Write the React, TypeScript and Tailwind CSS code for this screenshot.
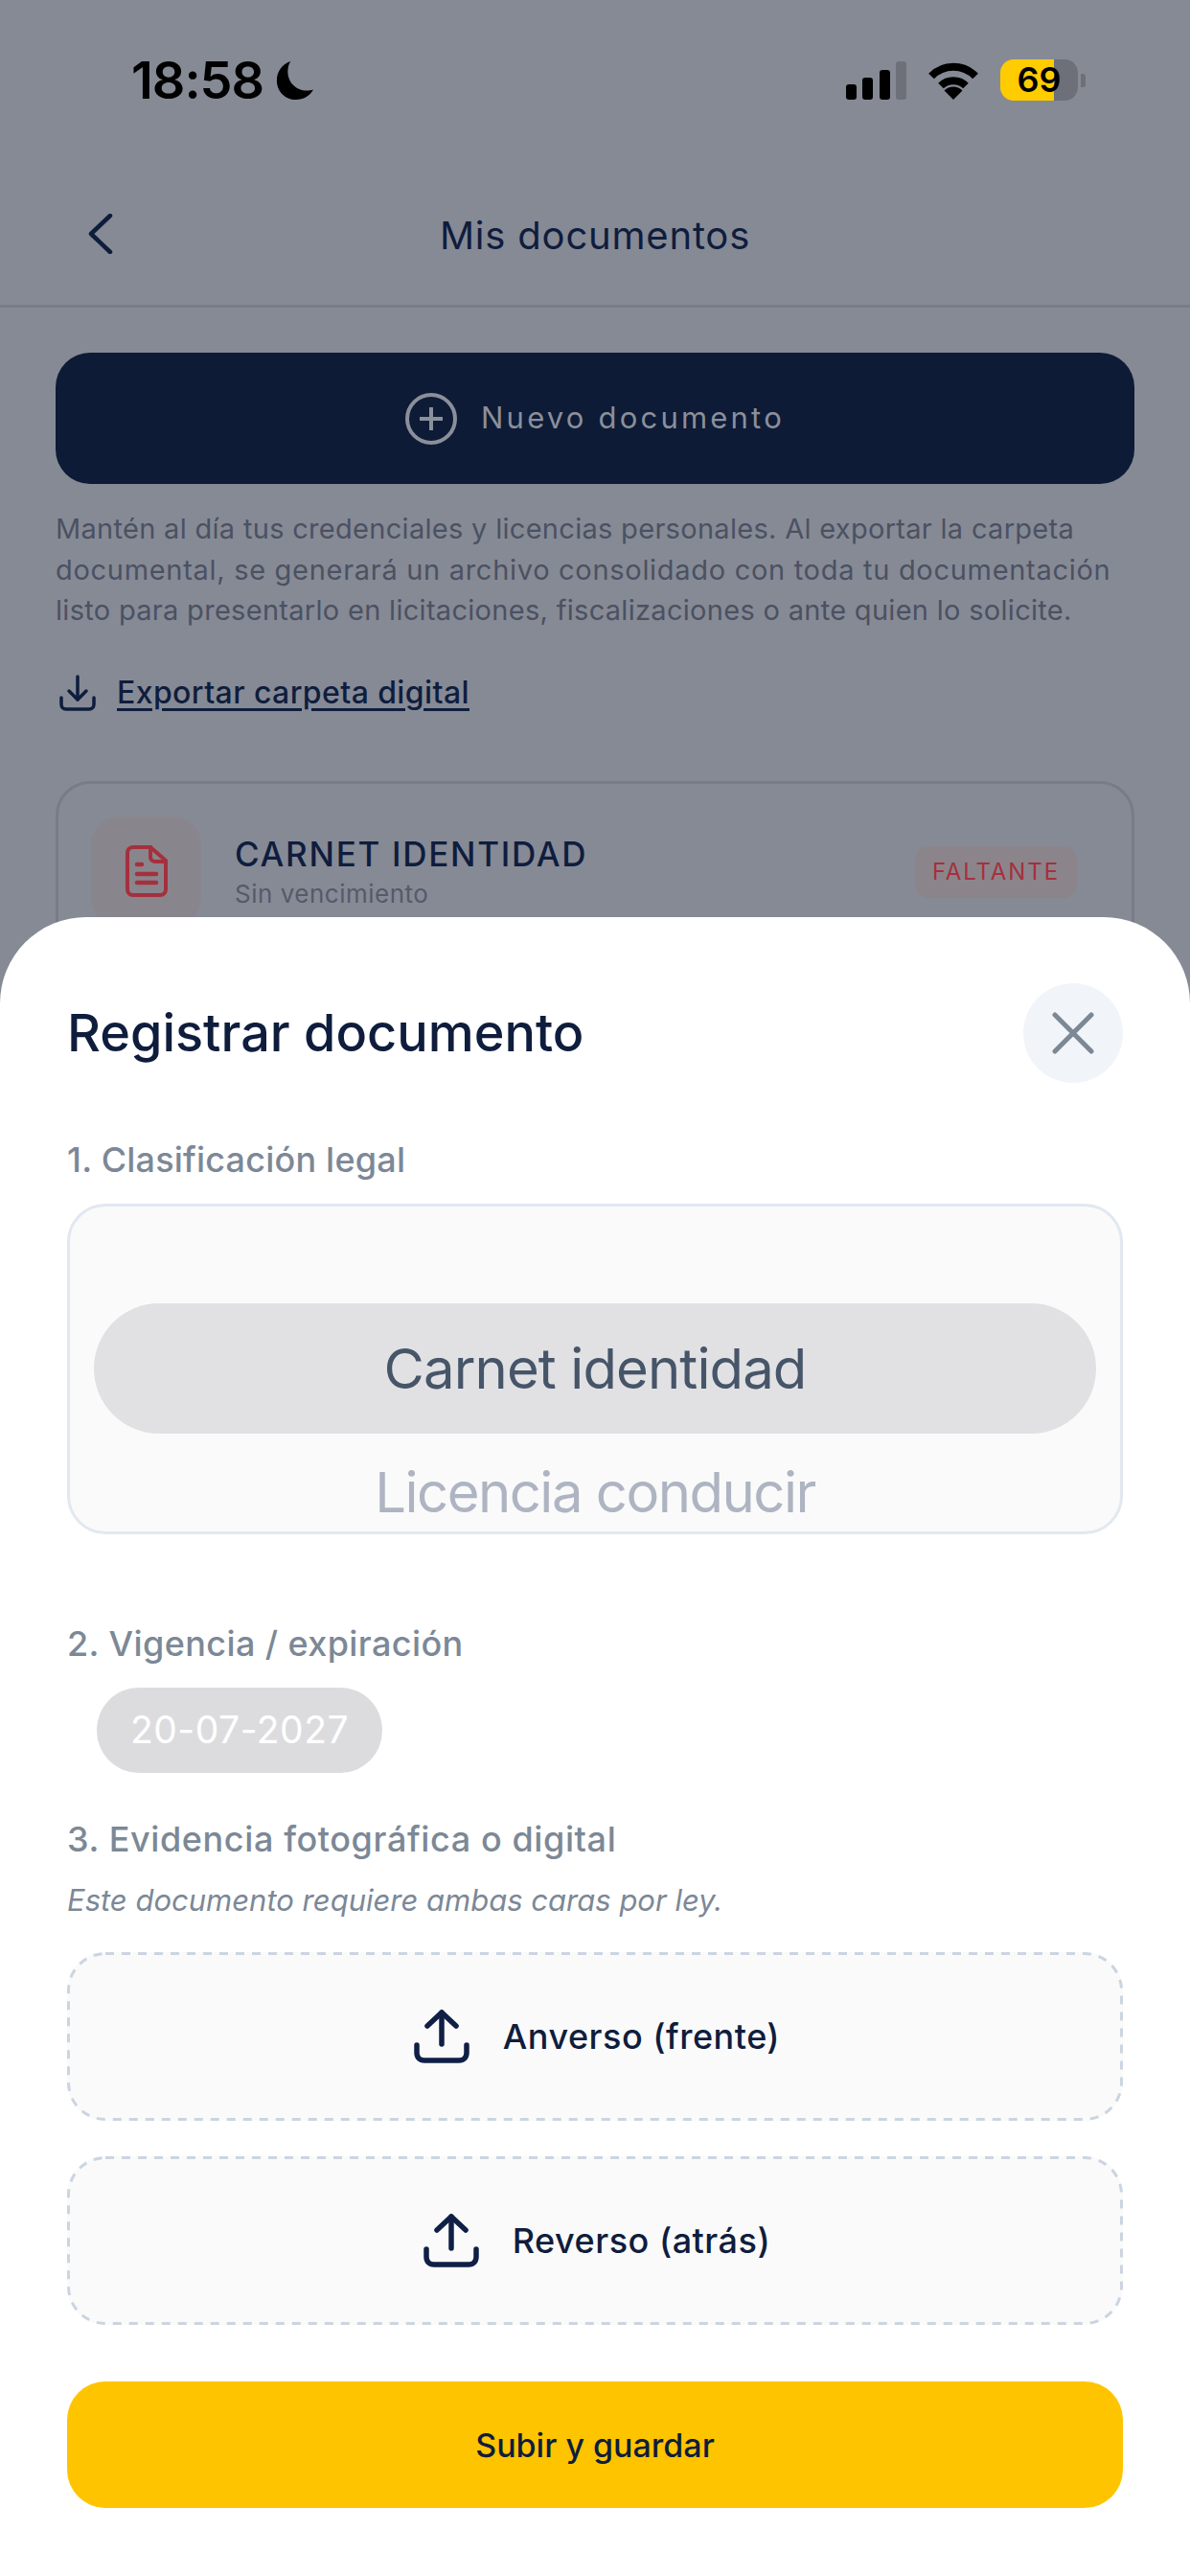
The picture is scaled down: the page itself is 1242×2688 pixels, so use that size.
import React from 'react'

const UploadIcon = () => (
  <svg width="58" height="58" viewBox="0 0 58 58" fill="none" stroke="#0f1f45" strokeWidth="5.500" strokeLinecap="round" strokeLinejoin="round">
    <path d="M29 37V4" />
    <path d="M14 18L29 4l15 14" />
    <path d="M3 38v8c0 5 3 8 8 8h36c5 0 8-3 8-8v-8" />
  </svg>
)

const UploadBox = ({ label }: { label: string }) => (
  <div className="relative h-[176px] rounded-[40px] bg-[#fafafa] flex items-center justify-center gap-[35px] pl-[4px]">
    <svg className="absolute inset-0" width="1102" height="176" fill="none">
      <rect x="1.500" y="1.500" width="1099" height="173" rx="38.500" stroke="#cbd5e1" strokeWidth="3" strokeDasharray="9 8" />
    </svg>
    <UploadIcon />
    <span className="text-[36px] font-medium text-[#0f1d3d] tracking-[0.5px]">{label}</span>
  </div>
)

const StatusBar = () => (
  <div className="h-[168px] flex items-start justify-between pl-[137px] pr-[109px] pt-[62px]">
    <div className="flex items-center gap-[12px]">
      <span className="text-[54px] leading-[44px] font-semibold text-black tracking-[-1px]">18:58</span>
      <svg width="42" height="42" viewBox="0 0 44 44" fill="#000">
        <path d="M17 1C8 4 2 12 2 22c0 12 9 21 21 21 8 0 15-4 19-11-2 1-5 1-7 1-12 0-21-9-21-21 0-4 1-8 3-11z" />
      </svg>
    </div>
    <div className="flex items-center gap-[21px]">
      <svg width="63" height="40" viewBox="0 0 63 40">
        <rect x="0" y="24" width="11" height="16" rx="3" fill="#000" />
        <rect x="17" y="17" width="11" height="23" rx="3" fill="#000" />
        <rect x="35" y="9" width="11" height="31" rx="3" fill="#000" />
        <rect x="52" y="0" width="11" height="40" rx="3" fill="#6d7078" />
      </svg>
      <svg width="56" height="40" viewBox="0 0 56 40" fill="none" stroke="#000" strokeWidth="8">
        <path d="M5 15.5a32 32 0 0 1 46 0" />
        <path d="M15 25.5a18.500 18.500 0 0 1 26 0" />
        <path d="M28 40L18.500 30.500a13.500 13.500 0 0 1 19 0z" fill="#000" stroke="none" />
      </svg>
      <div className="flex items-center gap-[3px]">
        <div className="relative w-[81px] h-[43px] flex">
          <div className="w-[56px] rounded-l-[14px] bg-[#ffcc00]" />
          <div className="flex-1 rounded-r-[14px] bg-[#6d7078]" />
          <span className="absolute inset-0 flex items-center justify-center text-[36px] leading-[43px] font-semibold text-black">69</span>
        </div>
        <div className="w-[5px] h-[14px] rounded-r-[3px] bg-[#6d7078]" />
      </div>
    </div>
  </div>
)

const App = () => {
  return (
    <div className="relative w-[1242px] h-[2688px] overflow-hidden bg-[#868a95] font-[Inter,sans-serif]">
      <StatusBar />

      <div className="relative h-[153px] border-b-[3px] border-[#787c88] flex items-center justify-center pt-[5px]">
        <svg className="absolute left-[92px] top-[55px]" width="26" height="42" viewBox="0 0 26 42" fill="none" stroke="#0f1d3d" strokeWidth="4.500" strokeLinecap="round" strokeLinejoin="round">
          <path d="M23 2L3 21l20 19" />
        </svg>
        <h1 className="text-[40px] font-normal text-[#0f1d3d] tracking-[0.8px]">Mis documentos</h1>
      </div>

      <div className="px-[58px]">
        <div className="mt-[47px] h-[137px] rounded-[36px] bg-[#0d1b36] flex items-center justify-center gap-[25px]">
          <svg width="54" height="54" viewBox="0 0 54 54" fill="none" stroke="#8b8f9b" strokeWidth="4">
            <circle cx="27" cy="27" r="25" />
            <path d="M27 15v24M15 27h24" />
          </svg>
          <span className="text-[31px] text-[#8b8f9b] tracking-[3.200px]">Nuevo documento</span>
        </div>

        <p className="mt-[26px] text-[29px] leading-[42.500px] text-[#4b5162]">
          <span className="block tracking-[0.3px]">Mantén al día tus credenciales y licencias personales. Al exportar la carpeta</span>
          <span className="block tracking-[0.7px]">documental, se generará un archivo consolidado con toda tu documentación</span>
          <span className="block tracking-[0.3px]">listo para presentarlo en licitaciones, fiscalizaciones o ante quien lo solicite.</span>
        </p>

        <div className="mt-[44px] h-[40px] flex items-center gap-[22px] pl-[4px]">
          <svg width="38" height="38" viewBox="0 0 38 38" fill="none" stroke="#0f1d3d" strokeWidth="3.500" strokeLinecap="round" strokeLinejoin="round">
            <path d="M19 2v24" />
            <path d="M10 17l9 9 9-9" />
            <path d="M2 24v7c0 3 2 5 5 5h24c3 0 5-2 5-5v-7" />
          </svg>
          <span className="text-[32px] font-medium text-[#0f1d3d] underline underline-offset-[5px] tracking-[0.4px]">Exportar carpeta digital</span>
        </div>

        <div className="mt-[72px] h-[300px] rounded-[36px] border-[3px] border-[#787c88] px-[34px] pt-[34px] flex items-start gap-[35px]">
          <div className="w-[115px] h-[115px] rounded-[30px] bg-[#89858d] flex items-center justify-center">
            <svg width="44" height="54" viewBox="0 0 44 54" fill="none" stroke="#a5303d" strokeWidth="4" strokeLinejoin="round" strokeLinecap="round">
              <path d="M8 2h18l16 14v30c0 3-2 6-6 6H8c-4 0-6-3-6-6V8c0-3 2-6 6-6z" />
              <path d="M26 2v10c0 3 2 5 5 5h11" />
              <path d="M12 20h5M12 30h20M12 39h20" strokeWidth="4.500" />
            </svg>
          </div>
          <div className="flex-1 pt-[19px]">
            <div className="text-[35px] leading-[40px] font-medium text-[#0f1d3d] tracking-[1.700px]">CARNET IDENTIDAD</div>
            <div className="mt-[4px] text-[26px] leading-[36px] text-[#555a69] tracking-[0.5px]">Sin vencimiento</div>
          </div>
          <div className="mt-[31px] mr-[23px] w-[169px] h-[54px] rounded-[14px] bg-[#8b858b] flex items-center justify-center text-[24px] font-normal text-[#a5303d] tracking-[1.900px]">
            FALTANTE
          </div>
        </div>
      </div>

      <div className="absolute left-0 right-0 bottom-0 h-[1731px] rounded-t-[90px] bg-white px-[70px] pt-[69px]">
        <div className="flex items-center justify-between">
          <h2 className="text-[54px] leading-[60px] font-medium text-[#0f1d3d]">Registrar documento</h2>
          <div className="w-[104px] h-[104px] rounded-full bg-[#f1f5f9] flex items-center justify-center">
            <svg width="44" height="44" viewBox="0 0 44 44" fill="none" stroke="#7c8896" strokeWidth="5" strokeLinecap="round">
              <path d="M3 3l38 38M41 3L3 41" />
            </svg>
          </div>
        </div>

        <div className="mt-[58px] text-[36px] leading-[44px] font-medium text-[#7c8896] tracking-[0.2px]">1. Clasificación legal</div>
        <div className="mt-[24px] h-[345px] rounded-[40px] border-[3px] border-[#e2e8f0] bg-[#fafafa] px-[25px] pt-[101px] overflow-hidden">
          <div className="h-[136px] rounded-[68px] bg-[#e1e1e4] flex items-center justify-center text-[58px] text-[#475569] tracking-[-0.9px]">
            Carnet identidad
          </div>
          <div className="mt-[26px] h-[70px] flex items-center justify-center text-[58px] text-[#aeb4c2] tracking-[-1.500px]">
            Licencia conducir
          </div>
        </div>

        <div className="mt-[92px] text-[36px] leading-[44px] font-medium text-[#7c8896] tracking-[0.4px]">2. Vigencia / expiración</div>
        <div className="mt-[24px] ml-[31px] w-[298px] h-[89px] rounded-[44px] bg-[#dcdcde] flex items-center justify-center text-[39px] text-white tracking-[0.5px]">
          20-07-2027
        </div>

        <div className="mt-[47px] text-[36px] leading-[44px] font-medium text-[#7c8896] tracking-[0.6px]">3. Evidencia fotográfica o digital</div>
        <div className="mt-[22px] text-[31px] leading-[40px] italic text-[#7c8896]">Este documento requiere ambas caras por ley.</div>

        <div className="mt-[34px] flex flex-col gap-[37px]">
          <UploadBox label="Anverso (frente)" />
          <UploadBox label="Reverso (atrás)" />
        </div>

        <div className="mt-[59px] h-[132px] rounded-[40px] bg-[#ffc400] flex items-center justify-center text-[34px] font-medium text-[#0f1d3d]">
          Subir y guardar
        </div>
      </div>
    </div>
  )
}

export default App
